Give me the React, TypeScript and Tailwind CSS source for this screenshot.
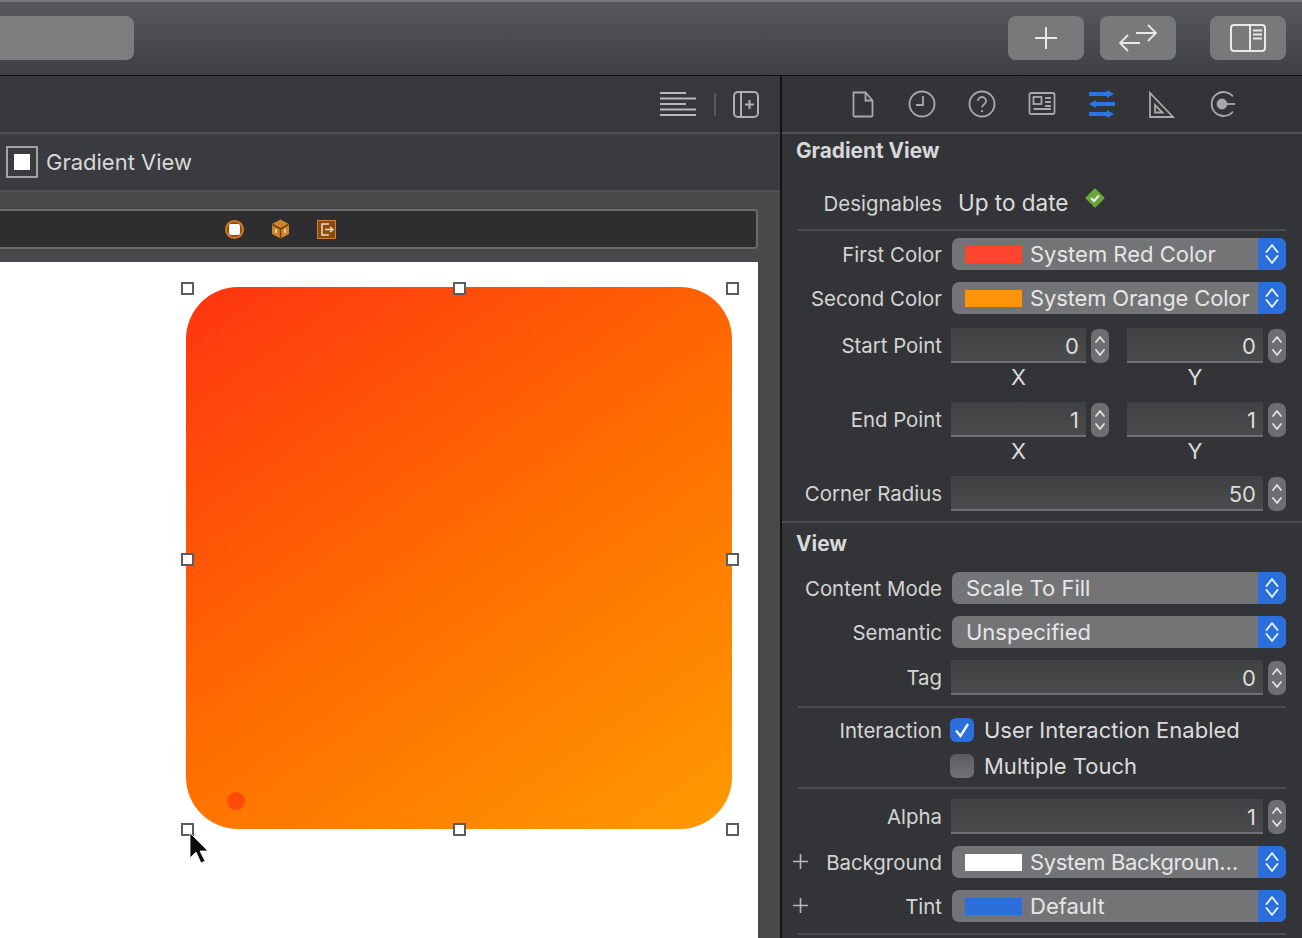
import React from 'react';

const SelectChevrons = () => (
  <svg width="14" height="22" viewBox="0 0 14 22" fill="none" stroke="currentColor" strokeWidth="2" strokeLinecap="round" strokeLinejoin="round">
    <path d="M1.500 9 7 2l5.500 7" />
    <path d="M1.500 13 7 20l5.500-7" />
  </svg>
);

const Stepper = () => (
  <div className="w-[18px] h-[34px] rounded-[7px] bg-[#6d6e70] flex items-center justify-center text-[#e2e2e2] shrink-0">
    <svg width="10" height="24" viewBox="0 0 10 24" fill="none" stroke="currentColor" strokeWidth="1.800" strokeLinecap="round" strokeLinejoin="round">
      <path d="M1 8l4-5 4 5" />
      <path d="M1 16l4 5 4-5" />
    </svg>
  </div>
);

const Field = ({ value, wide, w }: { value: string; wide?: boolean; w?: string }) => (
  <div className={`${wide ? 'w-[312px]' : w} h-[35px] bg-gradient-to-b from-[#404143] to-[#4a4b4d] border-b-2 border-[#6f7072] flex items-center justify-end pt-[3px] pr-[7px] text-[#dcdcdc] shrink-0`}>
    {value}
  </div>
);

const Label = ({ children }: { children: React.ReactNode }) => (
  <div className="w-[160px] shrink-0 pt-[2px] text-right text-[#d4d4d4] text-[20.4px]">{children}</div>
);

const Select = ({ text, swatch, tracking = '' }: { text: string; swatch?: string; tracking?: string }) => (
  <div className="ml-[10px] w-[334px] h-[32px] rounded-[7px] bg-[#737476] flex items-center text-[#e6e6e6] overflow-hidden">
    {swatch && <div className={`w-[57px] h-[17px] ml-[13px] mr-[8px] shrink-0 ${swatch}`} />}
    <div className={`flex-1 whitespace-nowrap ${tracking} ${swatch ? '' : 'pl-[14px]'}`}>{text}</div>
    <div className="w-[28px] h-full bg-[#2a6fdc] flex items-center justify-center text-[#e6eefc] shrink-0">
      <SelectChevrons />
    </div>
  </div>
);

const Divider = ({ full }: { full?: boolean }) => (
  <div className={`h-[2px] bg-[#4b4c4e] ${full ? '' : 'mx-[16px]'}`} />
);

const Row = ({ label, children, mt, plus }: { label: string; children: React.ReactNode; mt: string; plus?: boolean }) => (
  <div className={`relative flex items-center ${mt}`}>
    {plus && (
      <svg className="absolute left-[11px] top-[8px]" width="15" height="15" viewBox="0 0 15 15" stroke="#b8b8b8" strokeWidth="1.600"><path d="M7.500 0v15M0 7.500h15" /></svg>
    )}
    <Label>{label}</Label>
    {children}
  </div>
);

const PointRow = ({ label, x, y, mt }: { label: string; x: string; y: string; mt: string }) => (
  <div className={mt}>
    <div className="flex items-center">
      <Label>{label}</Label>
      <div className="ml-[9px]"><Field value={x} w="w-[135px]" /></div>
      <div className="ml-[5px]"><Stepper /></div>
      <div className="ml-[18px]"><Field value={y} w="w-[136px]" /></div>
      <div className="ml-[5px]"><Stepper /></div>
    </div>
    <div className="flex text-[#dcdcdc] h-[28px] items-center">
      <div className="ml-[169px] w-[135px] text-center">X</div>
      <div className="ml-[41px] w-[136px] text-center">Y</div>
    </div>
  </div>
);

const ToolButton = ({ children }: { children: React.ReactNode }) => (
  <div className="w-[76px] h-[44px] rounded-[8px] bg-[#79797b] flex items-center justify-center">{children}</div>
);

const Handle = ({ className }: { className: string }) => (
  <div className={`absolute w-[13px] h-[13px] bg-white border-2 border-[#5c5c5e] ${className}`} />
);

const iconStroke = { fill: 'none', stroke: '#a9a9a9', strokeWidth: 1.8 };

export default function App() {
  return (
    <div className="w-[1302px] h-[938px] overflow-hidden flex flex-col bg-[#333437] text-[22px] leading-none" style={{ fontFamily: 'Inter, "Noto Sans", sans-serif' }}>
      {/* Toolbar */}
      <header className="h-[76px] shrink-0 flex items-center justify-between pr-[16px] pb-[1px] bg-gradient-to-b from-[#57585c] to-[#3f4043] border-t-2 border-t-[#77787a] border-b border-b-[#0c0c0d]">
        <div className="w-[134px] h-[44px] rounded-r-[8px] bg-[#7d7d7f]" />
        <div className="flex">
          <ToolButton>
            <svg width="24" height="24" viewBox="0 0 24 24" stroke="#e8e8e8" strokeWidth="2"><path d="M12 1v22M1 12h22" /></svg>
          </ToolButton>
          <div className="ml-[16px]">
            <ToolButton>
              <svg width="38" height="28" viewBox="0 0 38 28" fill="none" stroke="#e8e8e8" strokeWidth="1.800"><path d="M17 9h20M29 1l8 8-8 8M1 19h20M9 11l-8 8 8 8" /></svg>
            </ToolButton>
          </div>
          <div className="ml-[34px]">
            <ToolButton>
              <svg width="36" height="28" viewBox="0 0 36 28" fill="none" stroke="#e8e8e8" strokeWidth="2"><rect x="1" y="1" width="34" height="26" rx="3" /><path d="M20 1v26M23 6.500h9M23 10.500h9M23 14.500h9" /></svg>
            </ToolButton>
          </div>
        </div>
      </header>

      <div className="flex flex-1 min-h-0">
        {/* Editor */}
        <main className="w-[782px] shrink-0 flex flex-col border-r-2 border-[#121213] bg-[#48494b]">
          <div className="h-[56px] shrink-0 flex items-center justify-end pr-[21px] bg-[#37383b]">
            <svg width="36" height="26" viewBox="0 0 36 26" stroke="#b9b9b9" strokeWidth="2"><path d="M0 2h26M0 7.500h36M0 13h26M0 18.500h36M0 24h36" /></svg>
            <div className="w-[2px] h-[23px] bg-[#57585a] ml-[18px] mr-[17px]" />
            <svg width="26" height="27" viewBox="0 0 26 27" fill="none" stroke="#b0b0b0" strokeWidth="2"><rect x="1" y="1" width="24" height="25" rx="4" /><path d="M8 1v25M12 13.500h9M16.500 9v9" /></svg>
          </div>
          <div className="h-[2px] shrink-0 bg-[#505153]" />
          <div className="h-[56px] shrink-0 flex items-center pl-[6px] bg-[#3a3b3e]">
            <div className="w-[32px] h-[32px] border-2 border-[#a3a3a3] flex items-center justify-center">
              <div className="w-[16px] h-[16px] bg-white" />
            </div>
            <span className="ml-[8px] text-[#d8d8d8]">Gradient View</span>
          </div>
          <div className="h-[19px] shrink-0 border-t-2 border-[#505153]" />
          <div className="h-[40px] shrink-0 mr-[22px] flex items-center pl-[225px] bg-[#2e2e30] border-y-2 border-r-2 border-[#6a6b6d] rounded-r-[4px]">
            <div className="w-[19px] h-[19px] rounded-full border-2 border-[#d07a1c] bg-[#8f4d12] flex items-center justify-center">
              <div className="w-[11px] h-[11px] bg-white rounded-[2px]" />
            </div>
            <svg className="ml-[27px]" width="19" height="20" viewBox="0 0 19 20"><path d="M9.500 0.500 18 5v10l-8.500 4.500L1 15V5z" fill="#cf8429" /><path d="M1.500 5.500l8 4.500 8-4.500M9.500 10v9" stroke="#6e3d0c" strokeWidth="1.500" fill="none" /><path d="M5 10v4M14 10v4" stroke="#f4e2c8" strokeWidth="1.500" /></svg>
            <svg className="ml-[27px]" width="19" height="19" viewBox="0 0 19 19"><rect x="0.500" y="0.500" width="18" height="18" fill="#8a4a12" stroke="#c9853b" /><path d="M12 4H5v11h7M8 9.500h8M13 7l3 2.500-3 2.500" fill="none" stroke="#f3d9bd" strokeWidth="1.500" /></svg>
          </div>
          <div className="h-[13px] shrink-0" />
          {/* Canvas */}
          <div className="relative flex-1 mr-[22px] bg-white">
            <div className="absolute left-[186px] top-[25px] w-[546px] h-[542px] rounded-[52px] bg-[linear-gradient(145deg,#ff3410,#ff6c00_50%,#ff9a00)]" />
            <div className="absolute left-[227px] top-[530px] w-[18px] h-[18px] rounded-full bg-[#ff4a08]" />
            <Handle className="left-[181px] top-[20px]" />
            <Handle className="left-[453px] top-[20px]" />
            <Handle className="left-[726px] top-[20px]" />
            <Handle className="left-[181px] top-[291px]" />
            <Handle className="left-[726px] top-[291px]" />
            <Handle className="left-[181px] top-[561px]" />
            <Handle className="left-[453px] top-[561px]" />
            <Handle className="left-[726px] top-[561px]" />
            <svg className="absolute left-[188px] top-[570px]" width="22" height="34" viewBox="0 0 22 34">
              <path d="M2 1v25l6-6 5 11 4-2-5-10h8z" fill="#0a0a0a" stroke="#ffffff" strokeWidth="0.800" />
            </svg>
          </div>
        </main>

        {/* Inspector */}
        <aside className="flex-1 min-w-0 flex flex-col text-[#dcdcdc]">
          <div className="h-[56px] shrink-0 flex items-center justify-center gap-[30px]">
            <svg width="30" height="28" viewBox="0 0 30 28" {...iconStroke}><path d="M6.500 2.500h12l7 8v15a1 1 0 0 1-1 1h-17a1 1 0 0 1-1-1zM18.500 2.500v8h7" /></svg>
            <svg width="30" height="28" viewBox="0 0 30 28" {...iconStroke}><circle cx="15" cy="14" r="12.500" /><path d="M16 6v9H9" /></svg>
            <svg width="30" height="28" viewBox="0 0 30 28" {...iconStroke}><circle cx="15" cy="14" r="12.500" /><path d="M11 11a4 4 0 1 1 6 3.500c-1.500 1-2 1.500-2 3" /><path d="M15 20v2" /></svg>
            <svg width="30" height="28" viewBox="0 0 30 28" {...iconStroke}><rect x="2.500" y="3" width="25" height="21" rx="1.500" /><rect x="6.500" y="7" width="8" height="7" /><path d="M18 8h6M18 12h6M18 16h6M6.500 19h17.500" /></svg>
            <svg width="30" height="28" viewBox="0 0 30 28" fill="#2a74e6"><path d="M2 2h18V0l7 4-7 4V6H2zM28 12H9v-2l-7 4 7 4v-2h19zM2 22h18v-2l7 4-7 4v-2H2z" /></svg>
            <svg width="30" height="28" viewBox="0 0 30 28" {...iconStroke}><path d="M3 3v24h23zM8 15v7.500h7.500z" /></svg>
            <svg width="30" height="28" viewBox="0 0 30 28" {...iconStroke}><path d="M26 6.500A12 12 0 1 0 26 21.500" /><circle cx="15" cy="14" r="4.500" fill="#a9a9a9" /><path d="M19 14h9" /></svg>
          </div>
          <div className="h-[2px] shrink-0 bg-[#505153]" />

          <div className="text-[20.8px] font-bold text-[#d8d8d8] pl-[14px] mt-[7px] h-[20px]">Gradient View</div>
          <div className="relative flex items-center mt-[31px] h-[22px]">
            <Label>Designables</Label>
            <span className="ml-[16px] text-[22.5px]">Up to date</span>
            <svg className="absolute left-[302px] top-[-5px]" width="22" height="22" viewBox="0 0 22 22">
              <path d="M11 2.500 19.500 11 11 19.500 2.500 11z" fill="#66a83c" stroke="#66a83c" strokeWidth="2" strokeLinejoin="round" />
              <path d="M7 11l3 3 5-5.500" fill="none" stroke="#f2f2f2" strokeWidth="2" />
            </svg>
          </div>
          <div className="mt-[15px]"><Divider /></div>

          <Row label="First Color" mt="mt-[7px]"><Select text="System Red Color" swatch="bg-[#ff452b]" /></Row>
          <Row label="Second Color" mt="mt-[12px]"><Select text="System Orange Color" swatch="bg-[#ff9408]" tracking="tracking-[-0.15px]" /></Row>
          <PointRow label="Start Point" x="0" y="0" mt="mt-[14px]" />
          <PointRow label="End Point" x="1" y="1" mt="mt-[11px]" />
          <div className="flex items-center mt-[11px]">
            <Label>Corner Radius</Label>
            <div className="ml-[9px]"><Field value="50" wide /></div>
            <div className="ml-[5px]"><Stepper /></div>
          </div>
          <div className="mt-[10px]"><Divider full /></div>

          <div className="text-[20.8px] font-bold text-[#d8d8d8] pl-[14px] mt-[11px] h-[20px]">View</div>
          <Row label="Content Mode" mt="mt-[18px]"><Select text="Scale To Fill" /></Row>
          <Row label="Semantic" mt="mt-[12px]"><Select text="Unspecified" /></Row>
          <div className="flex items-center mt-[12px]">
            <Label>Tag</Label>
            <div className="ml-[9px]"><Field value="0" wide /></div>
            <div className="ml-[5px]"><Stepper /></div>
          </div>
          <div className="mt-[11px]"><Divider /></div>

          <div className="flex items-center mt-[10px] h-[24px]">
            <Label>Interaction</Label>
            <div className="ml-[8px] w-[24px] h-[24px] rounded-[6px] bg-[#2a6fdc] flex items-center justify-center">
              <svg width="16" height="16" viewBox="0 0 16 16" fill="none" stroke="#f4f4f4" strokeWidth="2.400"><path d="M2 8.500 6.500 14 14 2" /></svg>
            </div>
            <span className="ml-[10px]">User Interaction Enabled</span>
          </div>
          <div className="flex items-center mt-[12px] h-[24px]">
            <div className="ml-[168px] w-[24px] h-[24px] rounded-[6px] bg-gradient-to-b from-[#5b5c5e] to-[#717274]" />
            <span className="ml-[10px]">Multiple Touch</span>
          </div>
          <div className="mt-[9px]"><Divider /></div>

          <div className="flex items-center mt-[10px]">
            <Label>Alpha</Label>
            <div className="ml-[9px]"><Field value="1" wide /></div>
            <div className="ml-[5px]"><Stepper /></div>
          </div>
          <Row label="Background" mt="mt-[12px]" plus><Select text="System Backgroun…" swatch="bg-white" tracking="tracking-[-0.35px]" /></Row>
          <Row label="Tint" mt="mt-[12px]" plus><Select text="Default" swatch="bg-[#2a6fdc]" /></Row>
          <div className="mt-[11px]"><Divider /></div>
        </aside>
      </div>
    </div>
  );
}
